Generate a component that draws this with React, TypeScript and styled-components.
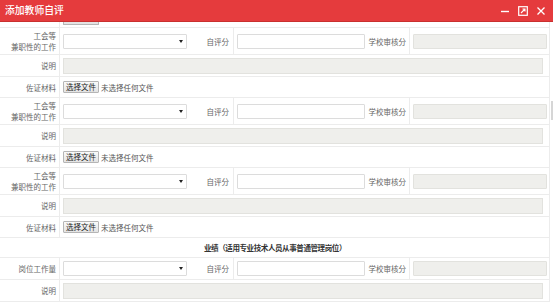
import React from "react";
import styled, { createGlobalStyle } from "styled-components";

const Global = createGlobalStyle`
  html, body { margin: 0; padding: 0; background: #fff; }
  body { font-family: "Noto Sans CJK SC", "Noto Sans", sans-serif; }
  * { box-sizing: border-box; }
`;

const Window = styled.div`
  width: 553px;
  height: 306px;
  display: flex;
  flex-direction: column;
  overflow: hidden;
  background: #fff;
`;

const TitleBar = styled.div`
  height: 22px;
  flex: none;
  background: #e53b3d;
  border-bottom: 1px solid #c9302f;
  display: flex;
  align-items: center;
  justify-content: space-between;
  padding: 0 7px 0 5px;
`;

const Title = styled.div`
  color: #fff;
  font-size: 9.8px;
  font-weight: 500;
  line-height: 1;
`;

const Controls = styled.div`
  display: flex;
  align-items: center;
  gap: 8px;
`;

const CtrlIcon = styled.svg`
  display: block;
  width: 10px;
  height: 10px;
`;

const Body = styled.div`
  flex: 1;
  display: flex;
  min-height: 0;
`;

const Scroller = styled.div`
  flex: 1;
  overflow: hidden;
  min-height: 0;
`;

const Track = styled.div`
  width: 3px;
  flex: none;
  padding-top: 79px;
  background: #fff;
`;

const Thumb = styled.div`
  width: 2px;
  margin-left: 1px;
  height: 19px;
  background: #d6d6d6;
`;

const Table = styled.div`
  width: 550px;
  display: flex;
  flex-direction: column;
`;

const Row = styled.div<{ $h: number; $cols: string }>`
  display: grid;
  grid-template-columns: ${(p) => p.$cols};
  height: ${(p) => p.$h}px;
  border-bottom: 1px solid #ececec;
`;

const Cell = styled.div<{ $top?: boolean }>`
  display: flex;
  align-items: ${(p) => (p.$top ? "flex-start" : "center")};
  border-right: 1px solid #ececec;
  padding: 0 3px;
  min-width: 0;
`;

const LabelCell = styled(Cell)`
  justify-content: flex-end;
  text-align: right;
`;

const Label = styled.span`
  font-size: 7.5px;
  line-height: 11px;
  color: #666;
  white-space: nowrap;
`;

const InlineLabel = styled(Label)<{ $pr: number }>`
  margin-left: auto;
  padding-right: ${(p) => p.$pr}px;
`;

const Select = styled.div<{ $w: number }>`
  width: ${(p) => p.$w}px;
  height: 15px;
  border: 1px solid #dcdcdc;
  border-radius: 1px;
  background: #fff;
  display: flex;
  align-items: center;
  justify-content: flex-end;
  padding-right: 3px;
  flex: none;
`;

const Caret = styled.svg`
  width: 4px;
  height: 3px;
  display: block;
`;

const Input = styled.div<{ $w: number; $disabled?: boolean }>`
  width: ${(p) => p.$w}px;
  height: 15px;
  flex: none;
  border: 1px solid ${(p) => (p.$disabled ? "#e2e2de" : "#dcdcdc")};
  background: ${(p) => (p.$disabled ? "#efefec" : "#fff")};
  border-radius: 1px;
`;

const TextArea = styled.div`
  width: 480px;
  height: 16px;
  flex: none;
  border: 1px solid #e2e2de;
  background: #efefec;
`;

const FileButton = styled.div`
  width: 36px;
  height: 12px;
  border: 1px solid #b5b5b5;
  border-radius: 1px;
  background: linear-gradient(#fafafa, #e3e3e3);
  font-size: 7.5px;
  line-height: 10px;
  color: #222;
  display: flex;
  align-items: center;
  justify-content: center;
  flex: none;
`;

const ButtonStub = styled.div`
  width: 36px;
  height: 3px;
  border: 1px solid #b5b5b5;
  border-top: none;
  border-radius: 0 0 1px 1px;
  background: #e3e3e3;
  flex: none;
`;

const FileText = styled.span`
  font-size: 7.5px;
  color: #555;
  margin-left: 2px;
  white-space: nowrap;
`;

const Heading = styled.div`
  height: 20px;
  border-bottom: 1px solid #ececec;
  border-right: 1px solid #ececec;
  display: flex;
  align-items: center;
  justify-content: center;
  font-size: 7.5px;
  font-weight: 700;
  letter-spacing: -0.4px;
  color: #333;
  padding-left: 1px;
`;

const SCORE_COLS = "60px 174px 176px 140px";
const WIDE_COLS = "60px 490px";

function ScoreRow({ label, h }: { label: React.ReactNode; h: number }) {
  return (
    <Row $h={h} $cols={SCORE_COLS}>
      <LabelCell>
        <Label>{label}</Label>
      </LabelCell>
      <Cell>
        <Select $w={124}>
          <Caret viewBox="0 0 4 3">
            <path d="M0 0h4L2 3z" fill="#222" />
          </Caret>
        </Select>
        <InlineLabel $pr={1}>自评分</InlineLabel>
      </Cell>
      <Cell>
        <Input $w={128} />
        <InlineLabel $pr={0}>学校审核分</InlineLabel>
      </Cell>
      <Cell>
        <Input $w={134} $disabled />
      </Cell>
    </Row>
  );
}

function NoteRow() {
  return (
    <Row $h={22} $cols={WIDE_COLS}>
      <LabelCell>
        <Label>说明</Label>
      </LabelCell>
      <Cell>
        <TextArea />
      </Cell>
    </Row>
  );
}

function FileRow() {
  return (
    <Row $h={21} $cols={WIDE_COLS}>
      <LabelCell>
        <Label>佐证材料</Label>
      </LabelCell>
      <Cell>
        <FileButton>选择文件</FileButton>
        <FileText>未选择任何文件</FileText>
      </Cell>
    </Row>
  );
}

function CutFileRow() {
  return (
    <Row $h={6} $cols={WIDE_COLS}>
      <LabelCell $top />
      <Cell $top>
        <ButtonStub />
      </Cell>
    </Row>
  );
}

const twoLine = (
  <>
    工会等
    <br />
    兼职性的工作
  </>
);

export default function App() {
  return (
    <>
      <Global />
      <Window>
        <TitleBar>
          <Title>添加教师自评</Title>
          <Controls>
            <CtrlIcon viewBox="0 0 10 10">
              <path d="M1 5.5h8" stroke="#fff" strokeWidth="1.4" />
            </CtrlIcon>
            <CtrlIcon viewBox="0 0 10 10">
              <rect x="0.7" y="0.7" width="8.6" height="8.6" fill="none" stroke="#fff" strokeWidth="1.2" />
              <path d="M3 7L7 3M4.5 3H7v2.5" fill="none" stroke="#fff" strokeWidth="1.1" />
            </CtrlIcon>
            <CtrlIcon viewBox="0 0 10 10">
              <path d="M1.5 1.5l7 7M8.5 1.5l-7 7" stroke="#fff" strokeWidth="1.3" />
            </CtrlIcon>
          </Controls>
        </TitleBar>
        <Body>
          <Scroller>
            <Table>
              <CutFileRow />
              <ScoreRow label={twoLine} h={27} />
              <NoteRow />
              <FileRow />
              <ScoreRow label={twoLine} h={27} />
              <NoteRow />
              <FileRow />
              <ScoreRow label={twoLine} h={27} />
              <NoteRow />
              <FileRow />
              <Heading>业绩（适用专业技术人员从事普通管理岗位）</Heading>
              <ScoreRow label="岗位工作量" h={22} />
              <NoteRow />
            </Table>
          </Scroller>
          <Track>
            <Thumb />
          </Track>
        </Body>
      </Window>
    </>
  );
}
